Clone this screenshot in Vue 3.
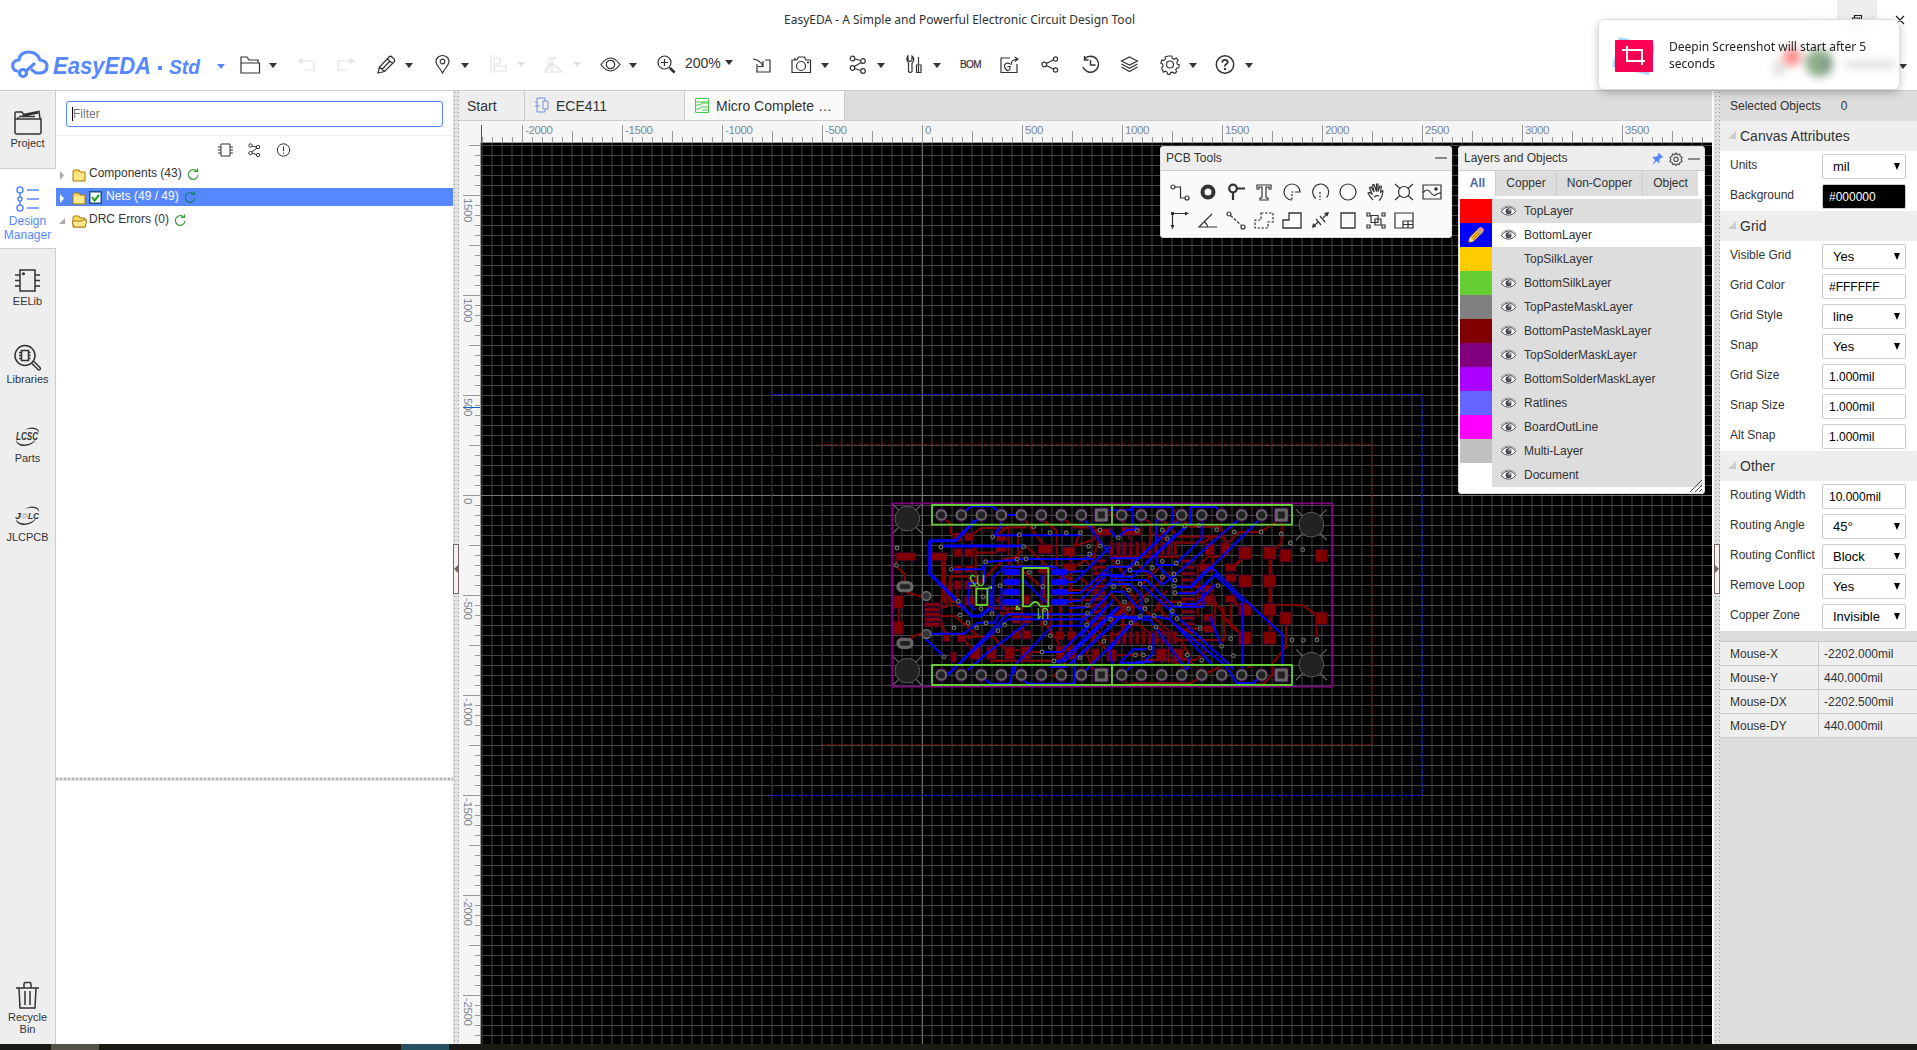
<script setup>
const tri = '<path d="M0 0h8l-4 5z" fill="#333"/>'
const triGrey = '<path d="M0 0h8l-4 5z" fill="#e2e2e2"/>'

// Toolbar glyphs: x/y is the top-left corner, w/h the drawn size
const tools = [
  { x: 217, y: 64, w: 8, h: 5, g: '<path d="M0 0h8l-4 5z" fill="#58f"/>' },
  { x: 240, y: 56, w: 21, h: 18, g: '<path d="M1 17V1h6l2 3h9v3M1 7h18.500v10H1z"/>' },
  { x: 269, y: 63, w: 8, h: 5, g: tri },
  { x: 297, y: 59, w: 19, h: 12, c: 'dim', g: '<path d="M2 2h15v9H8M5 0v4L1.500 2z"/>' },
  { x: 337, y: 59, w: 19, h: 12, c: 'dim', g: '<path d="M16 2H1v9h9M13 0v4l4-2z"/>' },
  { x: 377, y: 55, w: 19, h: 19, g: '<path d="M1 18l1.500-6L12 2q1.500-1.500 3 0l2 2q1.500 1.500 0 3L7.500 16.500zM2.500 12l5 4.500M10.500 4l5 4.500M5 14.500l7.500-8"/>' },
  { x: 405, y: 63, w: 8, h: 5, g: tri },
  { x: 435, y: 55, w: 15, h: 19, g: '<path d="M7.500 18C5 13 1 10 1 6.500a6.500 6 0 0113 0C14 10 10 13 7.500 18z"/><circle cx="7.500" cy="6.500" r="2.300"/>' },
  { x: 461, y: 63, w: 8, h: 5, g: tri },
  { x: 490, y: 55, w: 17, h: 19, c: 'dim', g: '<path d="M1 0v19M4 3h6v6H4zM4 11h12v5H4z"/>' },
  { x: 517, y: 62, w: 8, h: 5, g: triGrey },
  { x: 544, y: 56, w: 20, h: 17, c: 'dim', g: '<path d="M1 16h17L8 7zM8 16V3M3 5q4-5 9-2M11 0v4M1 16l5-10"/>' },
  { x: 573, y: 62, w: 8, h: 5, g: triGrey },
  { x: 600, y: 57, w: 21, h: 15, g: '<path d="M1 7.500q9.500-13 19 0q-9.500 13-19 0z"/><circle cx="10.500" cy="7.500" r="4.200"/>' },
  { x: 629, y: 63, w: 8, h: 5, g: tri },
  { x: 657, y: 55, w: 19, h: 19, g: '<circle cx="7.500" cy="7.500" r="6.500"/><path d="M7.500 4v7M4 7.500h7M12.500 12.500l5 5" /><path d="M13 13l4.500 4.500" stroke-width="2.600"/>' },
  { x: 685, y: 54, w: 38, t: '200%', c: 'zoom' },
  { x: 725, y: 60, w: 8, h: 5, g: tri },
  { x: 752, y: 57, w: 20, h: 16, g: '<path d="M5 7v8h13V3h-5M1 2q7 1 10 7M11 4v5.500H6"/>' },
  { x: 791, y: 56, w: 21, h: 18, g: '<path d="M1 4h5l1.500-3h6L15 4h4.500v12.500H1z"/><circle cx="10" cy="10" r="4.500"/><path d="M3 3h2" stroke-width="1.500"/><circle cx="17" cy="6.500" r=".5"/>' },
  { x: 821, y: 63, w: 8, h: 5, g: tri },
  { x: 849, y: 55, w: 18, h: 19, g: '<circle cx="3.500" cy="3.500" r="2.300"/><circle cx="14" cy="6" r="2.300"/><circle cx="3.500" cy="13" r="2.300"/><circle cx="14" cy="16" r="2.300"/><path d="M6 4l5.500 1.500M5.500 11.500l6.500-4M6 13.500l5.500 2"/>' },
  { x: 877, y: 63, w: 8, h: 5, g: tri },
  { x: 906, y: 55, w: 17, h: 19, g: '<path d="M2 1v4l1.500 1.500h1L6 5V1q2.500 2 1.500 5L6 8v8.500q-1.500 2-3.500 0V8Q-.5 4 2 1zM12.500 2v8M10.500 10h4.500v7.500h-4.500zM12.500 11v6"/>' },
  { x: 933, y: 63, w: 8, h: 5, g: tri },
  { x: 960, y: 57, w: 22, t: 'BOM', c: 'bom' },
  { x: 1000, y: 56, w: 20, h: 17, g: '<path d="M10 2H1v14.500h16V8M11 9q0-5 6-6M14.500 1l3.500 2-3 2.500"/><path d="M10 8Q8 6.500 6 7.500t-1.500 3T6.500 14 10 13v-2.500H7.500"/>' },
  { x: 1041, y: 56, w: 18, h: 17, g: '<circle cx="3.300" cy="8.500" r="2.300"/><circle cx="14.500" cy="3" r="2.100"/><circle cx="14.500" cy="14" r="2.100"/><path d="M5.500 7.500l7-3.700M5.500 9.500l7 3.700"/>' },
  { x: 1081, y: 55, w: 19, h: 19, g: '<path d="M3.500 4a8 8 0 11-1.500 8M3.500 1v4h4M9.500 5v5h5" stroke-width="1.400"/>' },
  { x: 1120, y: 55, w: 19, h: 19, g: '<path d="M9.500 2l8 4-8 4-8-4zM1.500 9l8 4.200 8-4.200M1.500 12l8 4.500 8-4.500" stroke-width="1.200"/>' },
  { x: 1160, y: 55, w: 20, h: 19, g: '<path d="M8.300 1h3.400l.5 2.500 2 1 2.300-1.300 2 2.300-1.500 2 .6 2 2 .5-.5 3.200-2.200.3-1 1.800 1 2-2.500 1.700-1.800-1.400-2 .3-1 2H7.500l-.8-2.200-1.900-1-2.200 1L.9 13.300 2.400 11.500 2 9.500 0 8.300l1-3 2.300.2L5 4l-.3-2z" transform="translate(.8 0) scale(.94 .97)"/><circle cx="10" cy="9.500" r="3.500"/>' },
  { x: 1189, y: 63, w: 8, h: 5, g: tri },
  { x: 1215, y: 55, w: 20, h: 19, g: '<circle cx="10" cy="9.500" r="8.700" stroke-width="1.500"/><path d="M7.300 7.500q0-2.700 2.700-2.700t2.700 2.500q0 1.200-1.500 2T10 11.500" stroke-width="1.800"/><circle cx="10" cy="14" r=".6"/>' },
  { x: 1245, y: 63, w: 8, h: 5, g: tri },
]
const toolItems = tools.map((t, i) => ({ ...t, gap: i ? t.x - tools[i - 1].x - tools[i - 1].w : t.x - 205 }))

const chip = '<path d="M5 1h15v21H5z"/><path d="M0 6h5M0 11.500h5M0 17h5M20 6h5M20 11.500h5M20 17h5"/><circle cx="8.500" cy="4.800" r=".8"/>'
const swoosh = '<path d="M6 5.500Q16-2.500 22.500 2q2 1.500 1.500 4q-1-4-7-4.300Q10 1.600 6 5.500zM22 11q-5 9-15 8Q1 17.500 1 13q2 4.500 9 4.500 7-.5 12-6.500z" fill="#333" stroke="none"/>'
const nav = [
  { n: ['Project'], w: 28, h: 25, g: '<path d="M1 9h26v13q0 2-2 2H3q-2 0-2-2zM1 9V3q0-1 1-1h6l1.500 2.500L25 1.500l1 7M8 6l16-3M4 9l0-2M5 6.500h16"/>' },
  { n: ['Design', 'Manager'], w: 24, h: 26, c: 'on', g: '<circle cx="4" cy="4" r="3"/><circle cx="4" cy="22" r="3"/><path d="M4 7v4M4 15v4M11 4h12M11 13h12M11 22h12"/><circle cx="4" cy="13" r="2"/>' },
  { n: ['EELib'], w: 25, h: 23, g: chip },
  { n: ['Libraries'], w: 28, h: 28, g: '<circle cx="11" cy="11.500" r="10"/><path d="M7.500 6.500h7v10h-7zM5 8.500h2M5 11.500h2M5 14.500h2M14.500 8.500h2M14.500 11.500h2M14.500 14.500h2M18 19.500l6 6q1 1 2 0t0-2l-6-6"/>' },
  { n: ['Parts'], w: 25, h: 20, g: swoosh + '<text x="1" y="13" textLength="22" lengthAdjust="spacingAndGlyphs" font-size="10" font-weight="700" font-style="italic" fill="#333" stroke="none">LCSC</text>' },
  { n: ['JLCPCB'], w: 25, h: 20, g: swoosh + '<text x="0" y="12.500" textLength="6" lengthAdjust="spacingAndGlyphs" font-size="9" font-weight="700" font-style="italic" fill="#333" stroke="none">J</text><text x="6" y="12" font-size="7" fill="#aaa" stroke="none">@</text><text x="13" y="12.500" textLength="11" lengthAdjust="spacingAndGlyphs" font-size="9" font-weight="700" font-style="italic" fill="#333" stroke="none">LC</text>' },
]

const tree = [
  { t: 'Components (43)', folder: 'closed' },
  { t: 'Nets (49 / 49)', folder: 'closed', sel: true },
  { t: 'DRC Errors (0)', folder: 'open' },
]

const pcbTools = [
  '<circle cx="3" cy="4" r="2"/><circle cx="17" cy="15" r="2"/><path d="M5 4h5.500v11H15"/>',
  '<circle cx="10" cy="9" r="5.500" stroke-width="4"/>',
  '<circle cx="7" cy="5.500" r="3.800" stroke-width="2.200"/><path d="M11 5.500h8M7 9v8" stroke-width="2.200"/>',
  '<path d="M3 2h14v4h-2V4h-3v11h2v2H6v-2h2V4H5v2H3z" fill="#fff"/>',
  '<path d="M10 17a8 8 0 118-8h-3" /><path d="M15 9h-5v8" stroke-dasharray="2 1.500"/>',
  '<path d="M6 15.500a8 8 0 1110.500-1" /><path d="M10 9v8" stroke-dasharray="2 1.500"/>',
  '<circle cx="10" cy="9" r="8"/>',
  '<path d="M7 17q-3-3-5-7l1.500-.6L6 11 3.500 4.500 5 4l3 5-1.500-7L8 1.500l2.500 7V1H12v7.500L14 3l1.400.4L14.500 10q1-2.500 2.500-2l-1 5q-1 3-3 4.500M8 14q3-2 5-1"/>',
  '<circle cx="10" cy="9" r="5.500"/><path d="M1 1l5 4.500M19 1l-5 4.500M1 17l5-4.500M19 17l-5-4.500"/>',
  '<path d="M1 2h18v14H1zM1 10q4-6 8 0 3 4 6 1l4-1.500"/><circle cx="14" cy="6" r="1.200" fill="#333"/>',
  '<path d="M2.500 2.500h15M2.500 2.500v15"/><path d="M15 .5v4l4-2zM.5 14h4l-2 4zM1 1h3v3H1z" fill="#333" stroke="none"/>',
  '<path d="M14 3L1 16h18M6.500 11q3 2 3 5"/>',
  '<circle cx="3" cy="3" r="2"/><circle cx="17" cy="16" r="2"/><path d="M4.500 4.500L15.500 14.500" stroke-dasharray="3 1.500"/>',
  '<path d="M7 2h12v9h-5v6H1V9h6z" stroke-dasharray="2.500 1.500"/>',
  '<path d="M7 2h12v15H1V9h6z" stroke-width="1.300"/>',
  '<path d="M6 8l5 6M10 5l5 6"/><path d="M19 1l-5 1 3.500 3.500zM2 17l1-5 3.500 3.500z" fill="#333" stroke="none"/><path d="M17 3l-4 4M8 11l-4 4"/>',
  '<path d="M3 2h14v15H3z" stroke-width="1.300"/>',
  '<path d="M5 4.500h7v7H5zM9 8h6v6H9z"/><path d="M1 2h3v3H1zM16 2h3v3h-3zM1 14h3v3H1zM16 14h3v3h-3z"/>',
  '<path d="M1 2h18v15H1zM9 10h10M9 10v7M9 13.500h10M14 10v7"/>',
]

const layers = [
  ['TopLayer', '#ff0000'], ['BottomLayer', '#0000ff'], ['TopSilkLayer', '#ffcc00'], ['BottomSilkLayer', '#66cc33'],
  ['TopPasteMaskLayer', '#808080'], ['BottomPasteMaskLayer', '#800000'], ['TopSolderMaskLayer', '#800080'],
  ['BottomSolderMaskLayer', '#aa00ff'], ['Ratlines', '#6464ff'], ['BoardOutLine', '#ff00ff'], ['Multi-Layer', '#c0c0c0'], ['Document', '#ffffff'],
]

const sections = [
  { t: 'Canvas Attributes', rows: [['Units', 'mil', 's'], ['Background', '#000000', 'i dark']] },
  { t: 'Grid', rows: [['Visible Grid', 'Yes', 's'], ['Grid Color', '#FFFFFF', 'i'], ['Grid Style', 'line', 's'], ['Snap', 'Yes', 's'], ['Grid Size', '1.000mil', 'i'], ['Snap Size', '1.000mil', 'i'], ['Alt Snap', '1.000mil', 'i']] },
  { t: 'Other', rows: [['Routing Width', '10.000mil', 'i'], ['Routing Angle', '45°', 's'], ['Routing Conflict', 'Block', 's'], ['Remove Loop', 'Yes', 's'], ['Copper Zone', 'Invisible', 's']] },
]
const mouse = [['Mouse-X', '-2202.000mil'], ['Mouse-Y', '440.000mil'], ['Mouse-DX', '-2202.500mil'], ['Mouse-DY', '440.000mil']]

// Rulers: one tick per 50 mil, 10 px apart
const hTicks = []
for (let k = -44; k <= 78; k++) hTicks.push({ p: 922 + k * 10, k, v: k * 50 })
const vTicks = []
for (let k = -35; k <= 54; k++) vTicks.push({ p: 495 + k * 10, k, v: -k * 50 })

// Board artwork, in thirds of a pixel from (880, 490)
const pinXs = [184, 244, 304, 364, 424, 484, 544, 604, 725, 784, 845, 905, 965, 1025, 1085, 1145]
const redPads = [
  [48, 188, 58, 24], [143, 188, 58, 24], [222, 129, 24, 24], [254, 129, 27, 24], [349, 137, 30, 16], [222, 176, 24, 25], [254, 176, 27, 25], [347, 168, 32, 18],
  [474, 163, 44, 28], [549, 171, 36, 28], [222, 226, 24, 24], [254, 226, 27, 22], [222, 272, 22, 26], [254, 272, 22, 26], [254, 320, 30, 26],
  [42, 316, 28, 40], [42, 393, 28, 40], [134, 338, 48, 11], [134, 353, 48, 12], [134, 368, 48, 12], [134, 383, 48, 12], [134, 397, 48, 14],
  [189, 425, 20, 30], [232, 428, 24, 28], [396, 376, 26, 24], [428, 376, 26, 24], [396, 422, 25, 25], [428, 422, 25, 25], [527, 424, 25, 26], [562, 424, 26, 26],
  [212, 486, 17, 30], [270, 470, 32, 38], [320, 470, 29, 38], [374, 470, 30, 38], [422, 470, 30, 38], [528, 468, 26, 40], [562, 468, 26, 40], [636, 476, 22, 38], [680, 478, 26, 36],
  [640, 115, 55, 22], [725, 112, 58, 24], [474, 226, 32, 24], [550, 220, 36, 26], [428, 315, 22, 28],
  [975, 160, 28, 36], [1022, 158, 27, 36], [1076, 170, 38, 38], [1150, 170, 38, 38], [1199, 178, 35, 38], [1306, 178, 36, 38],
  [1036, 221, 32, 23], [1036, 252, 32, 24], [1076, 254, 38, 38], [1150, 254, 38, 38], [1036, 315, 32, 22], [1076, 340, 38, 38], [1150, 340, 38, 38],
  [1199, 366, 35, 38], [1306, 366, 36, 38], [1076, 425, 38, 38], [1150, 425, 38, 38], [958, 222, 44, 22], [958, 285, 44, 22], [958, 315, 44, 22], [970, 372, 34, 22], [970, 405, 34, 22],
  [828, 476, 32, 38], [878, 476, 32, 38], [690, 478, 20, 36],
]
for (let i = 0; i < 11; i++) {
  redPads.push([690 + i * 19, 156, 11, 40], [690 + i * 19, 424, 11, 38])
  redPads.push([904, 208 + i * 19, 40, 10], [638, 208 + i * 19, 40, 10])
}
const redThin = [
  'M188 82l24 20v28l20 12', 'M266 142l38-28h82v82', 'M48 202v26l27 25v30', 'M57 320v100', 'M75 305l42 13h22M70 455l46-23h22', 'M189 200v110l-8 34',
  'M288 188h54l24-10', 'M414 130v100h-10', 'M424 75l70 95', 'M440 170l64 60 70 40', 'M480 82l50 40v110', 'M544 82l40 30h62', 'M440 112h-60l-40 30',
  'M210 350v-80l-10 80h-20M210 255v80h30', 'M212 260h50l30 26 80-80h60', 'M232 300v50h25', 'M265 188l22-14V330',
  'M184 378h40l66 55-28 14', 'M199 440l-20-60M250 440h90l36 40h40', 'M244 442l34 36', 'M330 512h194l40-36', 'M484 486h-40', 'M512 437v-80l-20-40V250',
  'M410 390l-60-60 38-30M386 300v-80l40-40', 'M425 240l60 50v120', 'M540 430V256l30-30V180', 'M572 500V240', 'M430 430v-60h-70M496 400l40 60 20 60-36 40',
  'M560 300h100M560 330h110M590 350h90', 'M600 128l-16 40 60-20v-18', 'M660 130l-20 80M660 390l-40 100 20 50', 'M585 230l60-40', 'M430 355h-90l-30-14',
  'M690 70l40 20 20 60M770 60l40 40v60M820 130l60 28h90l30-20M835 75l55 60', 'M900 80l-60 60M880 60l50 50h90l20 50', 'M1205 95v60l-14 20', 'M1143 126h-66l-40 40', 'M1143 126l60-40',
  'M953 380V230l30-30h50v-60H890', 'M945 290h35l25 36v90h-90', 'M870 245l-60 60-50 40v60h-40M860 300l-30 50 60 60 50 20', 'M780 300l-20 30-60 50M690 310l40 40v100M740 260l-50-60h60l60 60',
  'M938 340h70l24 30v80H890l-60-40', 'M1052 340v70l40 26', 'M1190 345h78l56 40M1310 390v60', 'M1218 400v70l-40 50v34l-30 30h-40', 'M1116 532l-30-10M745 530l50-20h150l40-30', 'M740 580l-30-30M750 580h180l50-30 40-20',
  'M920 535l-60-30M780 495h-70M890 490l60 40M1000 200v30l-20 20', 'M820 365l40-30h60M810 200h90M850 220l-70 70', 'M690 440l80-40 80 60', 'M925 490l-20-34-110-96', 'M866 440v80',
  'M700 200h110M700 230h60M702 260l60 60M715 345l60 60M690 400l50-50h60M600 370l80 80M605 200l50 50M600 260l80 80M620 420l60 60',
]
const redThick = ['M1170 190v250', 'M1055 236l50-48', 'M1052 325l30 30', 'M572 226V440', 'M194 200v140', 'M1030 350v30l50 50']
const blueThick = ['M285 92l-58 60h-78v98l126 128h26l30-24', 'M188 168h242']
const blueMid = [
  'M244 75l28-26h66l26 26h60M364 90l-2 20-20 26h260M304 75l-26 26', 'M318 215l90-5M216 238h88l14-22M340 370v-110l36-30h150l30 40',
  'M412 207h200l30-18M440 207h200', 'M604 75l64 90 20 24', 'M560 276h24l108-108M570 246l40-3', 'M540 310l60-2 92-80', 'M545 336l56-4 90-90', 'M568 354l50-2 80-84',
  'M357 372l-14 26h-50l-40 33H140', 'M138 448l54 52M184 575l176-180 22-22h240', 'M204 552l180-164h230l70-70', 'M264 540l56-50 120-90', 'M304 555l26 26h60l8-50',
  'M400 552l8-30 110-115h100', 'M424 565l20 16h140v-70', 'M484 486h60l140-140', 'M524 514h30l150-150', 'M534 520l180-170M510 530h50l160-150', 'M604 555l100-100',
  'M432 272l66 66M485 255v60', 'M288 280h-22v60l20 20M312 220v60M326 290l8 60', 'M364 340v-50M364 360v-60',
  'M690 60h60l8-10h118v60l-60 60-70 60H690', 'M756 50v50l16 20M828 75v80l-50 50h-88', 'M905 85l-76 70-64 60-40 40h-60', 'M930 50v50l-100 92v30l50 54', 'M965 95v50l-80 80h-60', 'M930 50h76l20 20',
  'M1080 85L880 260l-34 24-40-40h-60', 'M1145 82L935 290h-60', 'M916 110l-120 110M890 130l-130 130h-70M690 270h110l80 80h90v-60l40-40', 'M880 290h50l60-60 16 12 80 80 120 110v90',
  'M885 310h60l60-56 82 80v200', 'M690 282h60l34 32v60l-40 40-60 60', 'M780 280l100 90 180 165M820 378l50 10 130 140M690 380h130M870 350v40l170 140 30 50h50l24-28', 'M990 380l34 90',
  'M898 342h50l60-60', 'M690 380l120 10 110 150', 'M924 496v40M800 478h-40l-40 40h70l30-30v-60', 'M728 555l40-40h50M700 540l-12-60 60-80',
  'M600 400l90-90M600 440l100-110M600 470l120-120M595 500l140-130', 'M710 145l30-26h34M690 120l20 24', 'M690 305h40l50 55',
]
const blueChips = [[370, 237], [370, 267], [370, 297], [370, 327], [514, 237], [514, 267], [514, 297], [514, 327]]
const vias = [
  [51, 174], [49, 226], [183, 171], [214, 238], [317, 215], [338, 141], [418, 134], [461, 110], [510, 128], [559, 128], [601, 128], [660, 120], [431, 170], [412, 208], [438, 207], [448, 247], [489, 290],
  [626, 169], [661, 168], [629, 192], [291, 285], [360, 287], [310, 321], [303, 356], [336, 371], [235, 334], [240, 375], [264, 398], [222, 413], [290, 413], [318, 399], [354, 422], [374, 404],
  [493, 360], [496, 398], [511, 437], [511, 472], [486, 486], [522, 513], [192, 500], [600, 503], [620, 404], [623, 370], [623, 346], [672, 454],
  [715, 143], [772, 122], [847, 120], [862, 146], [915, 108], [956, 106], [1010, 119], [1063, 126], [1143, 126], [1204, 132], [1231, 159], [1268, 179], [714, 216], [771, 221], [817, 234], [847, 214], [888, 219],
  [750, 240], [847, 261], [882, 252], [885, 271], [883, 289], [885, 308], [701, 290], [746, 300], [780, 282], [800, 331], [734, 336], [745, 357], [795, 356], [899, 342], [877, 363], [781, 379], [822, 377],
  [891, 386], [753, 399], [828, 411], [960, 416], [1014, 287], [1052, 446], [1060, 497], [1025, 469], [810, 474], [766, 495], [790, 495], [922, 495], [965, 511], [1236, 450], [1270, 451], [1311, 450], [692, 388],
]
const holes = [[82, 86], [82, 542], [1294, 104], [1294, 524]]
</script>

<template>
  <div class="app">
    <header class="top">
      <div class="title">EasyEDA - A Simple and Powerful Electronic Circuit Design Tool</div>
      <svg class="brand" width="205" height="50" viewBox="0 40 205 50">
        <g fill="none" stroke="#58f" stroke-width="3.200" stroke-linecap="round" stroke-linejoin="round">
          <path d="M17 71C11 70 11 60 19 60q1-8 10-8 8 0 11 8 7 1 7 6 0 7-7 7h-4l-4-3" />
          <circle cx="23" cy="73" r="3.500" />
          <path d="M26 71l8-7" />
        </g>
        <text x="53" y="74" textLength="98" lengthAdjust="spacingAndGlyphs" class="logo" font-size="24.500">EasyEDA</text>
        <rect x="158" y="66" width="4" height="4" fill="#58f" />
        <text x="169" y="74" textLength="31" lengthAdjust="spacingAndGlyphs" class="logo" font-size="21">Std</text>
      </svg>
      <div class="tools">
        <template v-for="(t, i) in toolItems" :key="i">
          <span v-if="t.t" :class="t.c" :style="{ marginLeft: t.gap + 'px', width: t.w + 'px', marginTop: t.y - 40 + 'px' }">{{ t.t }}</span>
          <svg v-else class="ico" :class="t.c" :width="t.w" :height="t.h" :style="{ marginLeft: t.gap + 'px', marginTop: t.y - 40 + 'px' }" v-html="t.g" />
        </template>
      </div>
      <svg class="winctl" width="125" height="90" viewBox="1792 0 125 90">
        <rect x="1837" y="0" width="40" height="34" fill="#eeeef0" />
        <path d="M1809 19.500h10M1852.500 24v-6h7v6zM1854.500 18v-2.500h7V22h-2M1896 16l8 8M1904 16l-8 8" fill="none" stroke="#222" stroke-width="1.200" />
        <path d="M1899 64h8l-4 5z" fill="#333" />
      </svg>
      <div class="toast">
        <svg class="ghosts" width="300" height="70" viewBox="1599 20 300 70">
          <circle cx="1779" cy="68" r="7" fill="#ddd" />
          <circle cx="1792" cy="57" r="9" fill="#ff8a8a" />
          <circle cx="1819" cy="63" r="14" fill="#8faf8c" />
          <path d="M1821 60h10v12h-8z" fill="#7d9186" />
          <rect x="1845" y="61" width="50" height="7" fill="#dcdcdc" />
        </svg>
        <svg class="shot" width="46" height="40" viewBox="0 0 46 40">
          <path d="M8 1l36 8-6 30L1 31z" fill="#a6d8fb" />
          <rect x="4" y="4" width="38" height="32" rx="1" fill="#ff0055" />
          <path d="M4 24l38-10v22H4z" fill="#e8004c" opacity=".5" />
          <path d="M16 10v15h18M11 14h20v15" fill="none" stroke="#fff" stroke-width="2" />
        </svg>
        <p>Deepin Screenshot will start after 5<br>seconds</p>
      </div>
    </header>

    <main class="body">
      <nav class="nav">
        <div v-for="(n, i) in nav" :key="i" class="nitem" :class="n.c">
          <span class="nicon"><svg :width="n.w" :height="n.h" v-html="n.g" /></span>
          <span v-for="l in n.n" :key="l" class="nlabel">{{ l }}</span>
        </div>
        <div class="nitem bin">
          <svg width="26" height="29"><path d="M1 7h23M4 7l1 20h15l1-20M9 7V3q0-1.500 1.500-1.500h4Q16 1.500 16 3v4M10 10v14M15 10v14" /></svg>
          <span class="nlabel">Recycle</span><span class="nlabel">Bin</span>
        </div>
      </nav>

      <aside class="left">
        <div class="fwrap"><div class="filter"><i></i>Filter</div></div>
        <div class="picks">
          <svg width="15" height="14"><path d="M3 1h9v12H3zM0 4h3M0 7h3M0 10h3M12 4h3M12 7h3M12 10h3" /></svg>
          <svg width="13" height="14"><circle cx="2.500" cy="2.500" r="1.700" /><circle cx="10" cy="4" r="1.700" /><circle cx="2.500" cy="10" r="1.700" /><circle cx="10" cy="12" r="1.700" /><path d="M4 3l4 1M4 9l5-4M4 10l4 1.500" /></svg>
          <svg width="15" height="14"><circle cx="7.500" cy="7" r="6.200" /><path d="M7.500 3.500v4.500M7.500 9.500v1.200" /></svg>
        </div>
        <div class="tree">
          <div v-for="r in tree" :key="r.t" class="trow" :class="{ sel: r.sel }">
            <svg width="6" height="9" class="exp"><path v-if="r.folder === 'closed'" d="M1 0l4 4.500L1 9z" :fill="r.sel ? '#fff' : '#aaa'" /><path v-else d="M6 1v6H0z" fill="#aaa" /></svg>
            <svg width="15" height="13" class="fold">
              <path d="M1 12V2l1-1h5l1 2h5v9z" fill="#fbd75b" stroke="#a87c16" />
              <path v-if="r.folder === 'closed'" d="M2 4h10v7H2z" fill="#ffe98a" />
              <path v-else d="M0 6h10l1-1h4l-2 7H2z" fill="#ffe98a" stroke="#a87c16" />
            </svg>
            <svg v-if="r.sel" width="13" height="13" class="chk"><rect x=".75" y=".75" width="11.500" height="11.500" fill="#fff" stroke="#1c5180" stroke-width="1.500" /><path d="M3 6l2.500 3.500L10 4" fill="none" stroke="#21a121" stroke-width="2" /></svg>
            <span>{{ r.t }}</span>
            <svg width="12" height="12" class="ref"><path d="M9.500 3A4.800 4.800 0 1011 7M7 3.500h3.500V.5" fill="none" :stroke="r.sel ? '#1b7a7a' : '#3a9c3a'" stroke-width="1.200" /></svg>
          </div>
        </div>
        <div class="hsplit"></div>
      </aside>

      <div class="vsplit"><div class="grip"><svg width="4" height="8"><path d="M4 0v8L0 4z" fill="#766" /></svg></div></div>

      <section class="center">
        <div class="tabs">
          <div class="tab start">Start</div>
          <div class="tab ece">
            <svg width="14" height="16"><path d="M2 4V1h8v3M2 12v3h8v-3M0 5h3M0 9h5M2 5v7M8 4h5v8H8z" fill="none" stroke="#6f8fdc" /></svg>ECE411
          </div>
          <div class="tab cur">
            <svg width="14" height="15"><path d="M.5.5h13v14H.5zM1 4h12M1 7h4l2-2h6M1 11h3l2-2h7M7 12h6" fill="none" stroke="#4c4" /></svg>Micro Complete …
          </div>
        </div>
        <svg class="work" width="1253" height="923" viewBox="459 121 1253 923">
          <rect x="459" y="121" width="1253" height="923" fill="#f5f5f5" />
          <rect x="481" y="143" width="1231" height="901" fill="#000" />
          <g fill="#222"><rect v-for="t in hTicks" :key="t.k" :x="t.p - 1" y="143" width="2" height="901" /></g>
          <g fill="#444"><rect v-for="t in vTicks" :key="t.k" x="481" :y="t.p" width="1231" height="1" /></g>
          <rect x="922" y="143" width="1" height="901" fill="#666" />
          <rect x="481" y="495" width="1231" height="1" fill="#777" />

          <rect x="771.500" y="394.500" width="650.500" height="401" fill="none" stroke="#0000e6" stroke-dasharray="4.500 1.500" />
          <rect x="821.500" y="444.500" width="550.500" height="300" fill="none" stroke="#800000" stroke-opacity=".85" stroke-dasharray="4 2" />

          <g transform="translate(880 490) scale(.33333)" fill="none" stroke-linejoin="round">
            <g stroke="#800000" stroke-width="6.500">
              <path v-for="d in redThin" :key="d" :d="d" />
              <path v-for="d in redThick" :key="d" :d="d" stroke-width="9" />
            </g>
            <g fill="#800000" stroke="#30003a" stroke-width="2.500"><rect v-for="(p, i) in redPads" :key="i" :x="p[0]" :y="p[1]" :width="p[2]" :height="p[3]" /></g>
            <g stroke="#00f" stroke-width="6"><path v-for="d in blueMid" :key="d" :d="d" /><path v-for="d in blueThick" :key="d" :d="d" stroke-width="9" /></g>
            <rect v-for="(p, i) in blueChips" :key="i" :x="p[0]" :y="p[1]" width="50" height="18" rx="7" fill="#00f" stroke="#2a00a0" stroke-width="2" />
            <g stroke="#707070" stroke-width="3.500" fill="#111"><circle v-for="(v, i) in vias" :key="i" :cx="v[0]" :cy="v[1]" r="5.500" /></g>
            <g v-for="(h, i) in holes" :key="i" stroke="#666" stroke-width="3.500">
              <path :d="`M${h[0] - 46} ${h[1] - 46}l92 92m0-92l-92 92`" />
              <circle :cx="h[0]" :cy="h[1]" r="37" fill="#222" stroke-width="2.500" />
            </g>
            <g fill="#222" stroke="#666" stroke-width="10">
              <rect x="54" y="278" width="42" height="24" rx="12" /><rect x="54" y="448" width="42" height="24" rx="12" />
              <circle cx="139" cy="318" r="13" fill="#333" stroke-width="5" /><circle cx="139" cy="432" r="13" fill="#333" stroke-width="5" />
            </g>
            <path d="M37 40h1320v550H37z" stroke="#800080" stroke-width="5.500" />
            <g v-for="y in [75, 555]" :key="y">
              <g v-for="x in pinXs" :key="x">
                <ellipse :cx="x" :cy="y" rx="19" ry="21" fill="#3a0848" />
                <circle :cx="x" :cy="y" r="14.500" fill="#222" stroke="#666" stroke-width="6" />
              </g>
              <g v-for="x in [664, 1204]" :key="x">
                <rect :x="x - 22" :y="y - 22" width="44" height="44" fill="#3a0848" />
                <rect :x="x - 15" :y="y - 15" width="30" height="30" fill="#222" stroke="#666" stroke-width="9" />
              </g>
            </g>
            <g stroke="#66cc33" stroke-width="5.500">
              <path d="M156 45h1080v59H156zM156 525h1080v60H156zM696 45v59M696 525v60M289 296h33v49h-33zM429 234h76v115h-24q-14-26-32 0h-20z" />
              <path d="M322 296l12-6v8M410 348l10 10h-12z" stroke-width="4" />
            </g>
            <g class="silk" fill="#66cc33" stroke="#66cc33" stroke-width="1.500">
              <text transform="translate(315 287) scale(-1 1)" textLength="48" lengthAdjust="spacingAndGlyphs" font-size="42">U2</text>
              <text transform="translate(507 354) scale(-1 -1)" textLength="40" lengthAdjust="spacingAndGlyphs" font-size="42">U1</text>
            </g>
          </g>

          <g fill="#999">
            <rect x="480" y="142" width="1232" height="1" /><rect x="480" y="142" width="1" height="902" />
            <template v-for="t in hTicks" :key="t.k">
              <rect :x="t.p" :y="t.k % 10 === 0 ? 125 : t.k % 5 === 0 ? 131 : 137" width="1" :height="t.k % 10 === 0 ? 17 : t.k % 5 === 0 ? 11 : 5" />
            </template>
            <template v-for="t in vTicks" :key="t.k">
              <rect :y="t.p" :x="t.k % 10 === 0 ? 463 : t.k % 5 === 0 ? 469 : 475" height="1" :width="t.k % 10 === 0 ? 17 : t.k % 5 === 0 ? 11 : 5" />
            </template>
          </g>
          <g class="rlabel">
            <template v-for="t in hTicks" :key="t.k"><text v-if="t.k % 10 === 0" :x="t.p + 3" y="134">{{ t.v }}</text></template>
            <template v-for="t in vTicks" :key="t.k"><text v-if="t.k % 10 === 0" :transform="`translate(464 ${t.p + 3}) rotate(90)`">{{ t.v }}</text></template>
          </g>
          <path d="M481.500 125v17M463 407.500h17" stroke="#06c" />
        </svg>

        <div class="panel pcb">
          <div class="phead">PCB Tools<svg class="min" width="12" height="2"><path d="M0 1h12" stroke="#555" stroke-width="1.300" /></svg></div>
          <div class="pgrid"><svg v-for="(g, i) in pcbTools" :key="i" width="20" height="18" class="ico" v-html="g" /></div>
        </div>

        <div class="panel lay">
          <div class="phead">Layers and Objects
            <span class="pic">
              <svg width="13" height="14"><path d="M8 1l4 4-1 1h-1L8 8q1 2 0 3.500L5.500 9 1 13.500 4 8 1.500 5.500Q3 4 5 5l2-2V2z" fill="#58f" /></svg>
              <svg width="14" height="14" class="ico"><path d="M7 1l1.500 1.700L10.700 2l.5 2.200L13 5.500 12.200 7.500 13 9.500l-2 1-.7 2L8.300 12 7 13.300 5.700 12l-2 .5L3 10.500l-2-1L1.800 7.500 1 5.500 3 4.200 3.500 2l2 .7z" stroke="#555" /><circle cx="7" cy="7.300" r="2.200" stroke="#555" /></svg>
              <svg width="12" height="2"><path d="M0 1h12" stroke="#555" stroke-width="1.300" /></svg>
            </span>
          </div>
          <div class="ltabs"><b>All</b><span class="t1">Copper</span><span class="t2">Non-Copper</span><span class="t3">Object</span></div>
          <div v-for="(l, i) in layers" :key="l[0]" class="lrow" :class="{ act: i === 1 }">
            <span class="sw" :style="{ background: l[1] }">
              <svg v-if="i === 1" width="16" height="16"><path d="M0 16l2-6L11 1q1-1 2 0l2 2q1 1 0 2L6 14z" fill="#f5b81c" /><path d="M3.500 11.500l8-8M5 13l8-8" stroke="#c07a10" /><path d="M10 2l1.500-1.500Q13-.5 14 .5l1.500 1.500q1 1 0 2L14 6z" fill="#e88b8b" /><path d="M9.500 3l4 4" stroke="#aaa" stroke-width="1.500" /><path d="M0 16l2-6 4 4z" fill="#f3d7a0" /><path d="M0 16l.8-2.200 1.500 1.500z" fill="#222" /></svg>
            </span>
            <span class="eye"><svg v-if="i !== 2" width="17" height="12"><path d="M1 6.500q7.500-9 15 0-7.500 7.500-15 0z" fill="#fff" stroke="#555" /><circle cx="8.500" cy="6.200" r="3" fill="#4a4a55" /><circle cx="9.500" cy="5" r="1" fill="#ccd" /><path d="M1 4.500q7.500-7 15 0" fill="none" stroke="#888" stroke-width=".8" /></svg></span>
            <span>{{ l[0] }}</span>
          </div>
          <svg class="rsz" width="14" height="13"><path d="M1 13L13 1M6 13l7-7M10 13l3-3" stroke="#444" fill="none" /></svg>
        </div>
      </section>

      <div class="vsplit right"><div class="grip"><svg width="4" height="8"><path d="M0 0v8l4-4z" fill="#766" /></svg></div></div>

      <aside class="props">
        <div class="selobj"><span>Selected Objects</span><span>0</span></div>
        <div v-for="s in sections" :key="s.t">
          <div class="shead"><svg width="8" height="8"><path d="M8 0v8H0z" fill="#ccc" /></svg>{{ s.t }}</div>
          <div v-for="r in s.rows" :key="r[0]" class="prow">
            <label>{{ r[0] }}</label>
            <div class="field" :class="r[2]">{{ r[1] }}<svg v-if="r[2] === 's'" width="6" height="7"><path d="M0 0h6L3 7z" fill="#000" /></svg></div>
          </div>
        </div>
        <div class="mouse">
          <div v-for="m in mouse" :key="m[0]" class="mrow"><span>{{ m[0] }}</span><span>{{ m[1] }}</span></div>
        </div>
      </aside>
    </main>
    <footer class="task"></footer>
  </div>
</template>

<style>
body { background: #fff; overflow: hidden; }
</style>
<style scoped>
.app { width: 1917px; height: 1050px; display: flex; flex-direction: column; overflow: hidden; font: 12px "Liberation Sans", Arial, sans-serif; color: #333; }
svg { display: block; flex: none; }
.top { height: 90px; border-bottom: 1px solid #ccc; display: grid; grid-template-columns: 205px 1fr 125px; grid-template-rows: 40px 50px; position: relative; background: #fff; flex: none; }
.title { grid-area: 1 / 1 / 2 / 4; text-align: center; font: 12px/40px "Noto Sans", sans-serif; color: #303030; padding-left: 2px; }
.brand { grid-area: 2 / 1; }
.logo { font-weight: 700; font-style: italic; fill: #58f; }
.tools { grid-area: 2 / 2; display: flex; align-items: flex-start; }
.ico { fill: none; stroke: #333; stroke-width: 1.2; overflow: visible; }
.tools .ico :deep(path[fill]) { stroke: none; }
.dim { stroke: #e2e2e2; }
.zoom { font-size: 14px; line-height: 19px; }
.bom { font-size: 10px; line-height: 15px; letter-spacing: -.6px; -webkit-text-stroke: .2px #333; }
.winctl { grid-area: 1 / 3 / 3 / 4; }
.toast { position: absolute; left: 1598px; top: 19px; width: 300px; height: 69px; border: 1px solid #ddd; border-radius: 7px; background: rgba(255, 255, 255, .88); backdrop-filter: blur(6px); box-shadow: 0 3px 8px rgba(0, 0, 0, .22); z-index: 9; display: flex; }
.ghosts { position: absolute; left: 0; top: 0; filter: blur(4px); }
.shot { margin: 16px 0 0 12px; position: relative; }
.toast p { margin: 18px 0 0 12px; font: 12px/17px "Noto Sans", sans-serif; color: #222; position: relative; white-space: nowrap; }
.body { display: flex; height: 953px; }
.nav { width: 56px; background: #eee; flex: none; display: flex; flex-direction: column; }
.nitem { height: 79px; border-right: 1px solid #ccc; box-sizing: border-box; display: flex; flex-direction: column; align-items: center; padding-top: 17px; font-size: 11px; }
.nitem:first-child { height: 78px; border-bottom: 1px solid #ccc; }
.nitem:nth-child(3) { border-top: 1px solid #ccc; }
.nitem svg { fill: none; stroke: #333; stroke-width: 1.5; overflow: visible; }
.nicon { height: 28px; display: flex; align-items: center; }
.nlabel { line-height: 14px; }
.nitem.on { background: #fff; border-right-color: #fff; color: #58f; font-size: 12px; padding-top: 16px; }
.nitem.on svg { stroke: #58f; }
.nitem.on .nicon { margin-bottom: 1px; }
.bin { flex: 1; justify-content: flex-end; padding-bottom: 9px; }
.bin .nlabel { line-height: 12px; }
.bin .nlabel:nth-child(2) { margin-top: 1px; }
.left { width: 397px; background: #fff; display: flex; flex-direction: column; flex: none; }
.fwrap { height: 45px; border-bottom: 1px solid #eee; padding: 10px 10px 0; box-sizing: border-box; }
.filter { height: 24px; border: 1px solid #58f; border-radius: 3px; line-height: 24px; color: #777; padding-left: 6px; display: flex; }
.filter i { width: 1px; height: 14px; margin: 5px 0 0 -1px; background: #000; }
.picks { display: flex; justify-content: center; gap: 15px; height: 28px; align-items: center; margin-bottom: 1px; }
.picks svg { fill: none; stroke: #333; }
.tree { flex: 1; }
.trow { height: 18px; margin-bottom: 5px; display: flex; align-items: center; padding-left: 3px; line-height: 16px; }
.trow span { margin-top: -2px; }
.trow.sel { background: #58f; color: #fff; }
.exp { margin: 2px 7px 0 0; }
.fold { margin: 3px 2px 0 0; }
.chk { margin: 1px 4px 0 0; }
.ref { margin: -1px 0 0 5px; }
.hsplit { height: 4px; margin-bottom: 263px; background: radial-gradient(circle at 1px 2px, #aaa 0 .7px, transparent .9px) 0 0 / 4px 4px, #e4e4e4; }
.vsplit { width: 6px; flex: none; background: radial-gradient(circle at 1.5px 1.5px, #999 0 .6px, transparent .9px) 0 0 / 4px 4px, #e0e0e0; display: flex; flex-direction: column; padding-top: 453px; box-sizing: border-box; }
.vsplit.right { width: 8px; border-left: 2px solid #fafafa; }
.grip { height: 48px; border: 1px solid #766; background: #f7f0f0; display: flex; align-items: center; }
.center { width: 1253px; flex: none; position: relative; display: flex; flex-direction: column; }
.tabs { height: 29px; border-bottom: 1px solid #ccc; background: #ddd; display: flex; }
.tab { background: #eee; border-right: 1px solid #ccc; box-sizing: border-box; display: flex; align-items: center; font-size: 14px; white-space: nowrap; padding-top: 1px; }
.tab svg { margin: -2px 7px 0 0; }
.start { width: 66px; padding-left: 8px; }
.ece { width: 160px; padding-left: 10px; }
.cur { width: 160px; padding-left: 10px; background: #fafafa; }
.work { width: 1253px; height: 923px; }
.rlabel { font-size: 11.5px; letter-spacing: -.4px; fill: #7b8897; }
.silk { font-family: "Noto Sans", sans-serif; font-weight: 300; }
.panel { position: absolute; background: #fafafa; border-radius: 3px; border: 1px solid #ddd; box-sizing: border-box; }
.pcb { left: 701px; top: 55px; width: 292px; height: 92px; }
.phead { height: 23px; background: #eee; border-bottom: 1px solid #ccc; line-height: 22px; padding-left: 5px; display: flex; justify-content: space-between; }
.min { margin: 10px 4px 0 0; }
.pgrid { display: grid; grid-template-columns: repeat(10, 28px); grid-auto-rows: 28px; justify-items: center; align-items: center; padding: 7px 0 0 5px; }
.lay { left: 999px; top: 55px; width: 247px; height: 348px; background: #fff; padding: 0 1px; }
.lay .phead { margin: 0 -1px; }
.pic { display: flex; align-items: center; gap: 6px; margin-right: 4px; }
.pic svg:nth-child(1) { margin-right: -1px; }
.pic svg:nth-child(3) { margin-left: -1px; }
.ltabs { display: flex; height: 25px; line-height: 24px; margin-bottom: 3px; text-align: center; }
.ltabs b { width: 35px; color: #46a; }
.ltabs span { background: #ddd; border-left: 1px solid #ccc; box-sizing: border-box; }
.t1 { width: 61px; }
.t2 { width: 86px; }
.t3 { width: 56px; }
.lrow { height: 24px; width: 242px; display: flex; align-items: center; background: #ddd; }
.lrow.act { background: #fff; }
.sw { width: 32px; height: 24px; display: flex; align-items: center; justify-content: center; }
.eye { width: 24px; margin-left: 8px; }
.rsz { position: absolute; right: 1px; bottom: 1px; }
.props { width: 197px; background: #ddd; flex: none; }
.selobj { height: 30px; line-height: 30px; padding-left: 10px; display: flex; gap: 20px; }
.shead { height: 30px; background: #eee; font-size: 14px; display: flex; align-items: center; padding-left: 8px; }
.shead svg { margin: -3px 4px 0 0; }
.prow { height: 30px; background: #fff; display: flex; padding-left: 10px; }
.prow label { width: 92px; line-height: 28px; white-space: nowrap; }
.field { width: 84px; height: 25px; margin-top: 3px; border: 1px solid #ccc; border-radius: 2px; background: #fff; box-sizing: border-box; line-height: 24px; padding-left: 6px; color: #000; }
.field.dark { background: #000; color: #fff; }
.field.s { font-size: 13px; padding: 0 5px 0 10px; display: flex; justify-content: space-between; align-items: center; }
.field.s svg { margin-top: -1px; }
.mouse { margin-top: 10px; border-top: 1px solid #ccc; }
.mrow { height: 23px; border-bottom: 1px solid #ccc; background: #eee; display: flex; line-height: 24px; }
.mrow span:first-child { width: 88px; padding-left: 10px; border-right: 1px solid #ccc; }
.mrow span:last-child { padding-left: 5px; }
.task { height: 6px; background: linear-gradient(90deg, transparent 51px, #55524a 51px 99px, transparent 99px 401px, #25505f 401px 449px, transparent 449px), #1c1a14; }
</style>
